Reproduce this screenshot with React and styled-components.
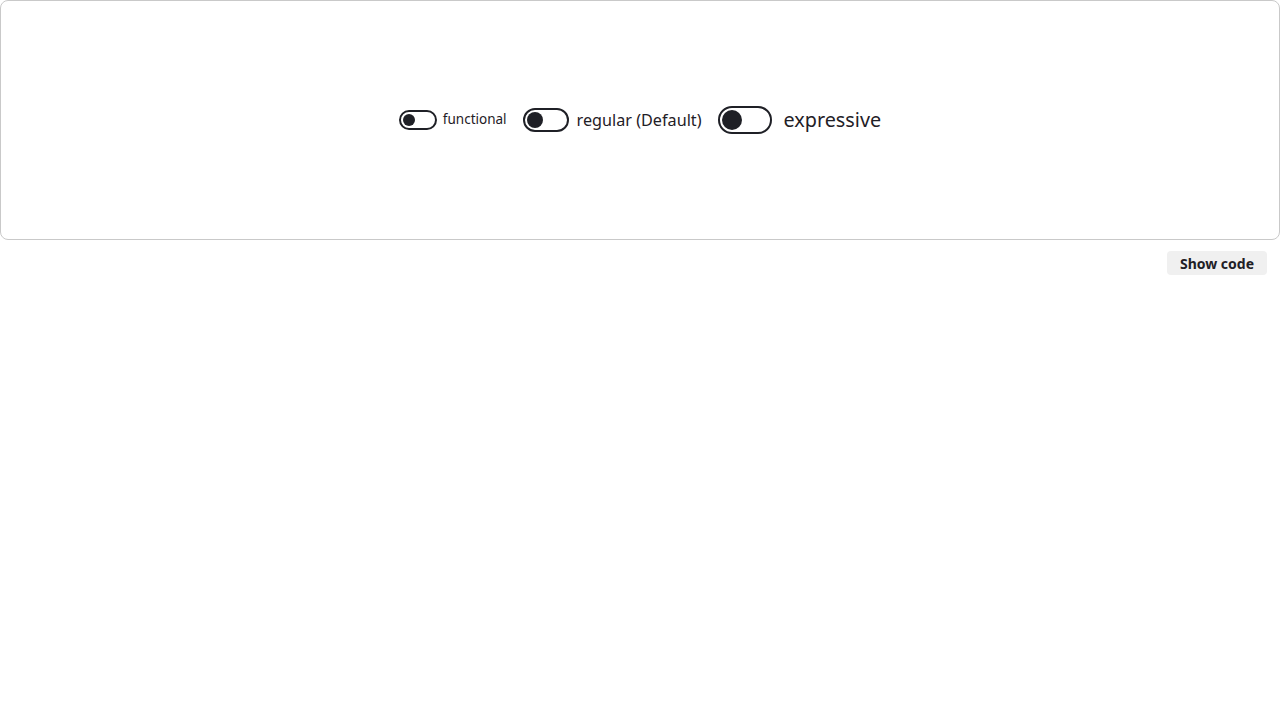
import styled, { createGlobalStyle } from 'styled-components'

const GlobalStyle = createGlobalStyle`
  body {
    margin: 0;
    font-family: 'Noto Sans', 'Open Sans', sans-serif;
    color: #1f2026;
    background: #fff;
  }
`

const sizes = {
  small: { w: 38, h: 20, knob: 12, font: 13.5, gap: 6 },
  medium: { w: 46, h: 24, knob: 16, font: 16.2, gap: 8 },
  large: { w: 54, h: 28, knob: 20, font: 19.8, gap: 12 }
}

const App = function () {
  const items = [
    { size: 'small', label: 'functional' },
    { size: 'medium', label: 'regular (Default)' },
    { size: 'large', label: 'expressive' }
  ]

  return (
    <>
      <GlobalStyle />
      <Preview>
        {items.map((item) => (
          <SwitchLabel key={item.size} $size={item.size}>
            <Track $size={item.size}>
              <Knob $size={item.size} />
            </Track>
            {item.label}
          </SwitchLabel>
        ))}
      </Preview>
      <Footer>
        <CodeButton>Show code</CodeButton>
      </Footer>
    </>
  )
}

export default App

const Preview = styled.div`
  box-sizing: border-box;
  height: 240px;
  border: 1px solid #c9c9c9;
  border-radius: 8px;
  display: flex;
  align-items: center;
  justify-content: center;
  gap: 16px;
`

const SwitchLabel = styled.label`
  display: flex;
  align-items: center;
  gap: ${(p) => sizes[p.$size].gap}px;
  font-size: ${(p) => sizes[p.$size].font}px;
  line-height: 1;
`

const Track = styled.span`
  box-sizing: border-box;
  width: ${(p) => sizes[p.$size].w}px;
  height: ${(p) => sizes[p.$size].h}px;
  border: 2px solid #1f2026;
  border-radius: 999px;
  display: flex;
  align-items: center;
  padding-left: 2px;
`

const Knob = styled.span`
  width: ${(p) => sizes[p.$size].knob}px;
  height: ${(p) => sizes[p.$size].knob}px;
  border-radius: 50%;
  background: #1f2026;
`

const Footer = styled.div`
  display: flex;
  justify-content: flex-end;
  padding: 11px 13px 0 0;
`

const CodeButton = styled.button`
  border: none;
  background: #f0f0f0;
  border-radius: 4px;
  height: 24px;
  width: 100px;
  font-family: inherit;
  font-size: 14px;
  font-weight: 700;
  color: #1f2026;
`
